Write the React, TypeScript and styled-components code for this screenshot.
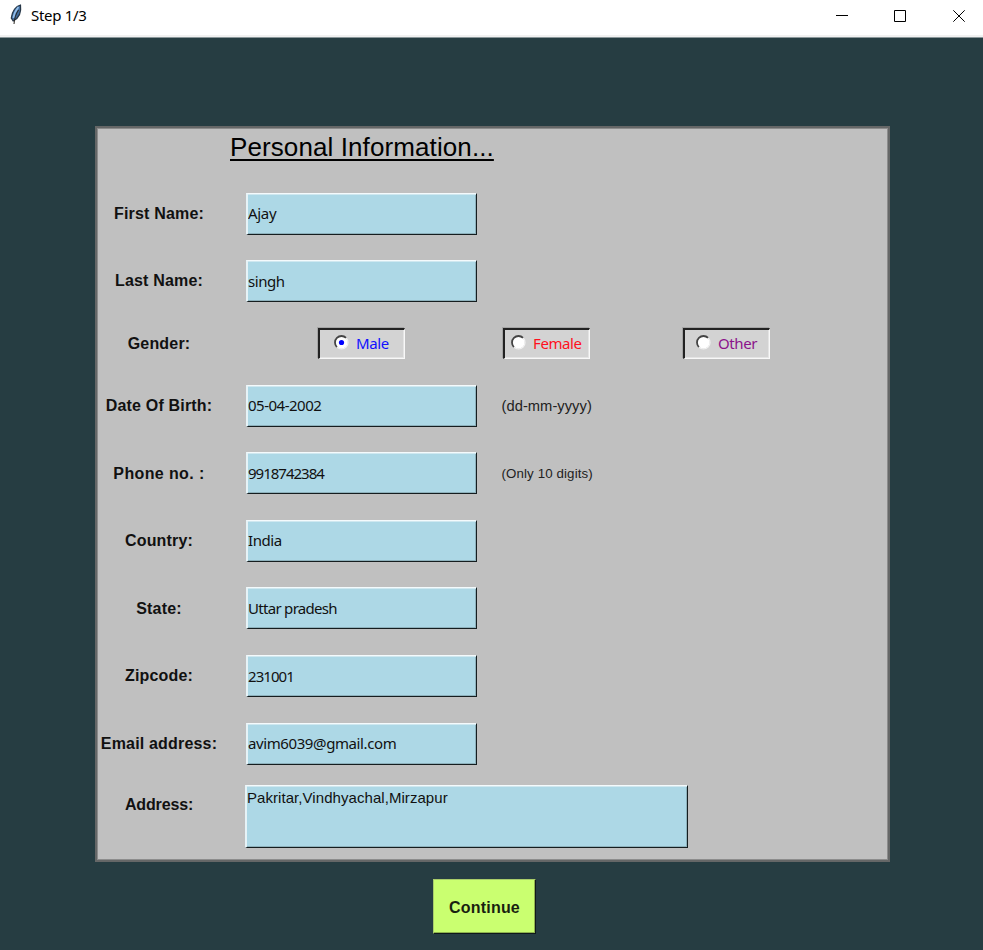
import React, { useState } from 'react';
import styled, { createGlobalStyle } from 'styled-components';

const GlobalStyle = createGlobalStyle`
  *, *::before, *::after { box-sizing: border-box; }
  body { margin: 0; overflow: hidden; background: #263d42; }
`;

const Window = styled.div`
  width: 983px;
  height: 950px;
  display: flex;
  flex-direction: column;
  background: #263d42;
  color: #111;
  font-family: 'Liberation Sans', Arial, sans-serif;
`;

const TitleBar = styled.header`
  height: 38px;
  flex: none;
  display: flex;
  align-items: flex-start;
  background: #fff;
  border-bottom: 1px solid #8a979a;
  box-shadow: inset 0 -2px #f1f1f1;
`;

const Feather = styled.svg`
  width: 16px;
  height: 22px;
  margin: 4px 7px 0 8px;
`;

const WindowTitle = styled.span`
  flex: 1;
  padding-top: 5px;
  font: 15px/20px 'Noto Sans', sans-serif;
  letter-spacing: -0.3px;
  color: #000;
`;

const WindowButtons = styled.div`
  display: flex;
  gap: 46px;
  padding: 10px 18px 0 0;
  svg { display: block; width: 12px; height: 12px; }
  svg:not(:last-child) { margin-left: -1px; margin-right: 1px; }
`;

const Main = styled.main`
  display: flex;
  flex-direction: column;
  padding: 88px 0 0 95px;
`;

const Panel = styled.section`
  width: 795px;
  height: 736px;
  background: #c0c0c0;
  border: 2px solid #656767;
  box-shadow: inset 0 0 0 1px #8c8c8c;
  padding: 1px;
`;

const Heading = styled.h1`
  width: max-content;
  margin: 3px 0 0 132px;
  height: 48px;
  font-size: 26px;
  line-height: 30px;
  font-weight: 400;
  letter-spacing: 0.1px;
  color: #000;
  text-decoration: underline;
  text-decoration-thickness: 2px;
  text-underline-offset: 3px;
  text-decoration-skip-ink: none;
`;

const Row = styled.div`
  height: 67.6px;
  display: grid;
  grid-template-columns: 121px 230px auto;
  column-gap: 27px;
  align-items: center;
`;

const Label = styled.label<{ $track?: number; $lift?: number }>`
  padding-left: 1px;
  text-align: center;
  white-space: nowrap;
  font-size: 16px;
  line-height: 20px;
  font-weight: 700;
  letter-spacing: ${p => p.$track ?? 0.18}px;
  padding-bottom: ${p => p.$lift ?? 0}px;
`;

const Entry = styled.input<{ $track?: number }>`
  width: 231px;
  height: 42px;
  margin-bottom: 0.6px;
  padding: 0 0 1px 0;
  border: 1px solid;
  border-color: #f4fafc #151d1f #151d1f #e6f3f7;
  border-left-width: 2px;
  box-shadow: inset 0 1px #cfe8f0, inset -1px -1px #8db1bc;
  border-radius: 0;
  outline: none;
  background: #add8e6;
  color: #111;
  font: 15px/20px 'Noto Sans', sans-serif;
  letter-spacing: ${p => p.$track ?? -0.45}px;
`;

const Hint = styled.span<{ $size: number; $track: number }>`
  margin-left: -1.5px;
  font-size: ${p => p.$size}px;
  letter-spacing: ${p => p.$track}px;
  color: #222;
`;

const GenderRow = styled.div`
  height: 57px;
  display: grid;
  grid-template-columns: 121px auto;
  align-items: center;
`;

const Choices = styled.div`
  display: flex;
  padding-left: 99px;
`;

const Choice = styled.button<{ $color: string; $pad: number; $after: number }>`
  width: 87px;
  height: 31px;
  margin-right: ${p => p.$after}px;
  padding: 0 0 3px ${p => p.$pad}px;
  display: flex;
  align-items: center;
  gap: 7px;
  border: 2px solid;
  border-color: #222 #f8f8f8 #f8f8f8 #222;
  border-right-width: 1px;
  border-bottom-width: 1px;
  box-shadow: inset -1px -1px #e4e4e4, -1px -1px #a4a4a4;
  background: #d3d3d3;
  color: ${p => p.$color};
  font: 15px/20px 'Noto Sans', sans-serif;
  letter-spacing: -0.4px;
`;

const RadioMark = styled.svg`
  width: 15px;
  height: 15px;
  flex: none;
`;

const AddressRow = styled.div`
  display: grid;
  grid-template-columns: 121px 443px;
  column-gap: 26px;
  align-items: center;
  padding-top: 7px;
`;

const AddressBox = styled.textarea`
  display: block;
  width: 443px;
  height: 63px;
  padding: 2px 0 0 0;
  resize: none;
  outline: none;
  overflow: hidden;
  border: 1px solid;
  border-color: #f4fafc #151d1f #151d1f #e6f3f7;
  border-left-width: 2px;
  box-shadow: inset 0 1px #cfe8f0, inset -1px -1px #8db1bc;
  border-radius: 0;
  background: #add8e6;
  color: #111;
  font: 15px/20px 'Liberation Sans', Arial, sans-serif;
  letter-spacing: 0.06px;
`;

const Continue = styled.button`
  width: 103px;
  height: 55px;
  margin: 17px 0 0 338px;
  padding: 2px 0 0;
  border: 1px solid;
  border-color: #a9cd6a #10181a #10181a #a9cd6a;
  box-shadow: inset -1px -1px #8eb34e;
  background: #caff70;
  color: #1a1f10;
  font: 700 16px/20px 'Liberation Sans', Arial, sans-serif;
  letter-spacing: 0.2px;
`;

const Radio = ({ on }: { on: boolean }) => (
  <RadioMark viewBox="0 0 15 15">
    <circle cx="7.5" cy="7.5" r="6" fill="#fff" />
    <path d="M2.9 12.1A6.4 6.4 0 0 1 12.1 2.9" fill="none" stroke="#444" strokeWidth="1.8" />
    <path d="M12.1 2.9A6.4 6.4 0 0 1 2.9 12.1" fill="none" stroke="#f2f2f2" strokeWidth="1.2" />
    {on && <circle cx="7.5" cy="7.5" r="2.6" fill="#00f" />}
  </RadioMark>
);

type Field = { label: string; value: string; track?: number; labelTrack?: number; hint?: string; hintSize?: number; hintTrack?: number };

const names: Field[] = [
  { label: 'First Name:', value: 'Ajay', track: -0.3 },
  { label: 'Last Name:', value: 'singh' },
];

const details: Field[] = [
  { label: 'Date Of Birth:', value: '05-04-2002', track: -0.5, hint: '(dd-mm-yyyy)', hintSize: 14.7, hintTrack: 0.05 },
  { label: 'Phone no. :', value: '9918742384', labelTrack: 0.38, track: -1.0, hint: '(Only 10 digits)', hintSize: 13.3, hintTrack: 0.12 },
  { label: 'Country:', value: 'India' },
  { label: 'State:', value: 'Uttar pradesh', track: -0.7 },
  { label: 'Zipcode:', value: '231001', track: -0.95 },
  { label: 'Email address:', value: 'avim6039@gmail.com', track: -0.4 },
];

const genders = [
  { name: 'Male', color: '#1010ff', pad: 14, after: 98 },
  { name: 'Female', color: '#ff1020', pad: 6, after: 93 },
  { name: 'Other', color: '#8b128b', pad: 11, after: 0 },
];

const FieldRow = ({ field }: { field: Field }) => (
  <Row>
    <Label $track={field.labelTrack}>{field.label}</Label>
    <Entry defaultValue={field.value} $track={field.track} spellCheck={false} />
    {field.hint && <Hint $size={field.hintSize!} $track={field.hintTrack!}>{field.hint}</Hint>}
  </Row>
);

export default function App() {
  const [gender, setGender] = useState('Male');
  return (
    <Window>
      <GlobalStyle />
      <TitleBar>
        <Feather viewBox="0 0 16 22">
          <path d="M12.5 1C8 2 4 7 3.3 14L5.2 17C11 14 13.5 8 12.5 1Z" fill="#3f6c9f" stroke="#273747" strokeWidth="1.2" />
          <path d="M10.5 3C8 6 6 10 5.4 14" fill="none" stroke="#91bce8" strokeWidth="1.8" />
          <path d="M10.5 6C8 10 6.4 14 6 20" fill="none" stroke="#29251f" strokeWidth="1" />
        </Feather>
        <WindowTitle>Step 1/3</WindowTitle>
        <WindowButtons>
          <svg viewBox="0 0 12 12"><path d="M0 5.5H12" stroke="#000" /></svg>
          <svg viewBox="0 0 12 12"><path d="M.5.5H11.5V11.5H.5Z" fill="none" stroke="#000" /></svg>
          <svg viewBox="0 0 12 12"><path d="M.3.3L11.7 11.7M11.7.3L.3 11.7" stroke="#000" /></svg>
        </WindowButtons>
      </TitleBar>
      <Main>
        <Panel>
          <Heading>Personal Information...</Heading>
          {names.map(f => <FieldRow key={f.label} field={f} />)}
          <GenderRow>
            <Label>Gender:</Label>
            <Choices>
              {genders.map(g => (
                <Choice key={g.name} $color={g.color} $pad={g.pad} $after={g.after} onClick={() => setGender(g.name)}>
                  <Radio on={gender === g.name} />
                  {g.name}
                </Choice>
              ))}
            </Choices>
          </GenderRow>
          {details.map(f => <FieldRow key={f.label} field={f} />)}
          <AddressRow>
            <Label $lift={22} $track={-0.15}>Address:</Label>
            <AddressBox defaultValue="Pakritar,Vindhyachal,Mirzapur" spellCheck={false} />
          </AddressRow>
        </Panel>
        <Continue>Continue</Continue>
      </Main>
    </Window>
  );
}
